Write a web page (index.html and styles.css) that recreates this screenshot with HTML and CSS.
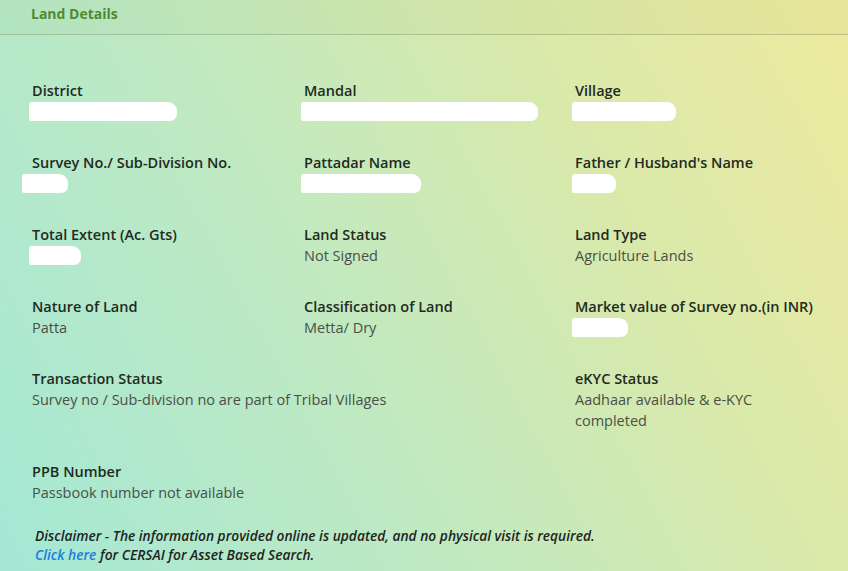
FILE: index.html
```html
<!DOCTYPE html>
<html>
<head>
<meta charset="utf-8">
<link rel="stylesheet" href="styles.css">
</head>
<body>
<div class="card">
  <div class="card-header">Land Details</div>
  <div class="card-body">
    <div class="grid">
      <div class="cell"><div class="label">District</div><div class="value"><span class="redact" style="width:148px"></span></div></div>
      <div class="cell"><div class="label">Mandal</div><div class="value"><span class="redact" style="width:237px"></span></div></div>
      <div class="cell"><div class="label">Village</div><div class="value"><span class="redact" style="width:104px"></span></div></div>

      <div class="cell"><div class="label">Survey No./ Sub-Division No.</div><div class="value"><span class="redact shift" style="width:46px"></span></div></div>
      <div class="cell"><div class="label">Pattadar Name</div><div class="value"><span class="redact" style="width:120px"></span></div></div>
      <div class="cell"><div class="label">Father / Husband's Name</div><div class="value"><span class="redact" style="width:44px"></span></div></div>

      <div class="cell"><div class="label">Total Extent (Ac. Gts)</div><div class="value"><span class="redact" style="width:52px"></span></div></div>
      <div class="cell"><div class="label">Land Status</div><div class="value">Not Signed</div></div>
      <div class="cell"><div class="label">Land Type</div><div class="value">Agriculture Lands</div></div>

      <div class="cell"><div class="label">Nature of Land</div><div class="value">Patta</div></div>
      <div class="cell"><div class="label">Classification of Land</div><div class="value">Metta/ Dry</div></div>
      <div class="cell"><div class="label">Market value of Survey no.(in INR)</div><div class="value"><span class="redact" style="width:56px"></span></div></div>

      <div class="cell span2"><div class="label">Transaction Status</div><div class="value">Survey no / Sub-division no are part of Tribal Villages</div></div>
      <div class="cell"><div class="label">eKYC Status</div><div class="value narrow">Aadhaar available &amp; e-KYC completed</div></div>

      <div class="cell"><div class="label">PPB Number</div><div class="value">Passbook number not available</div></div>
    </div>
    <div class="disclaimer">
      <p>Disclaimer - The information provided online is updated, and no physical visit is required.</p>
      <p><a href="#" class="link">Click here</a> for CERSAI for Asset Based Search.</p>
    </div>
  </div>
</div>
</body>
</html>
```
FILE: styles.css
```css
html, body {
  margin: 0;
  padding: 0;
  height: 100%;
}
body {
  font-family: "Open Sans", "Liberation Sans", sans-serif;
  background: linear-gradient(62deg, #a4e8d5 0%, #bfe9c2 38%, #dbe9aa 72%, #eeea9e 100%);
  overflow: hidden;
}
.card {
  min-height: 571px;
}
.card-header {
  height: 35px;
  box-sizing: border-box;
  padding: 5px 31px 0;
  font-size: 14px;
  font-weight: 700;
  line-height: 18px;
  color: #4f8a33;
  background: rgba(120, 130, 60, 0.05);
  border-bottom: 1px solid rgba(110, 130, 90, 0.35);
}
.card-body {
  padding: 45px 32px 0;
}
.grid {
  display: grid;
  grid-template-columns: 272px 271px 240px;
  row-gap: 30px;
}
.span2 {
  grid-column: span 2;
}
.label {
  font-size: 14.5px;
  font-weight: 600;
  line-height: 21px;
  color: #222a22;
}
.value {
  font-size: 14.5px;
  line-height: 21px;
  color: #4a4f48;
  min-height: 21px;
}
.narrow {
  max-width: 200px;
}
.redact {
  display: inline-block;
  height: 19px;
  margin-top: 1px;
  margin-left: -3px;
  background: #fff;
  border-radius: 3px 9px 7px 2px;
  vertical-align: top;
}
.shift {
  margin-left: -10px;
}
.disclaimer {
  margin-top: 23px;
  padding-left: 3px;
  font-size: 13.75px;
  font-style: italic;
  font-weight: 600;
  line-height: 19px;
  color: #1e2420;
}
.disclaimer p {
  margin: 0;
}
.link {
  color: #1e7be0;
  text-decoration: none;
}
```
